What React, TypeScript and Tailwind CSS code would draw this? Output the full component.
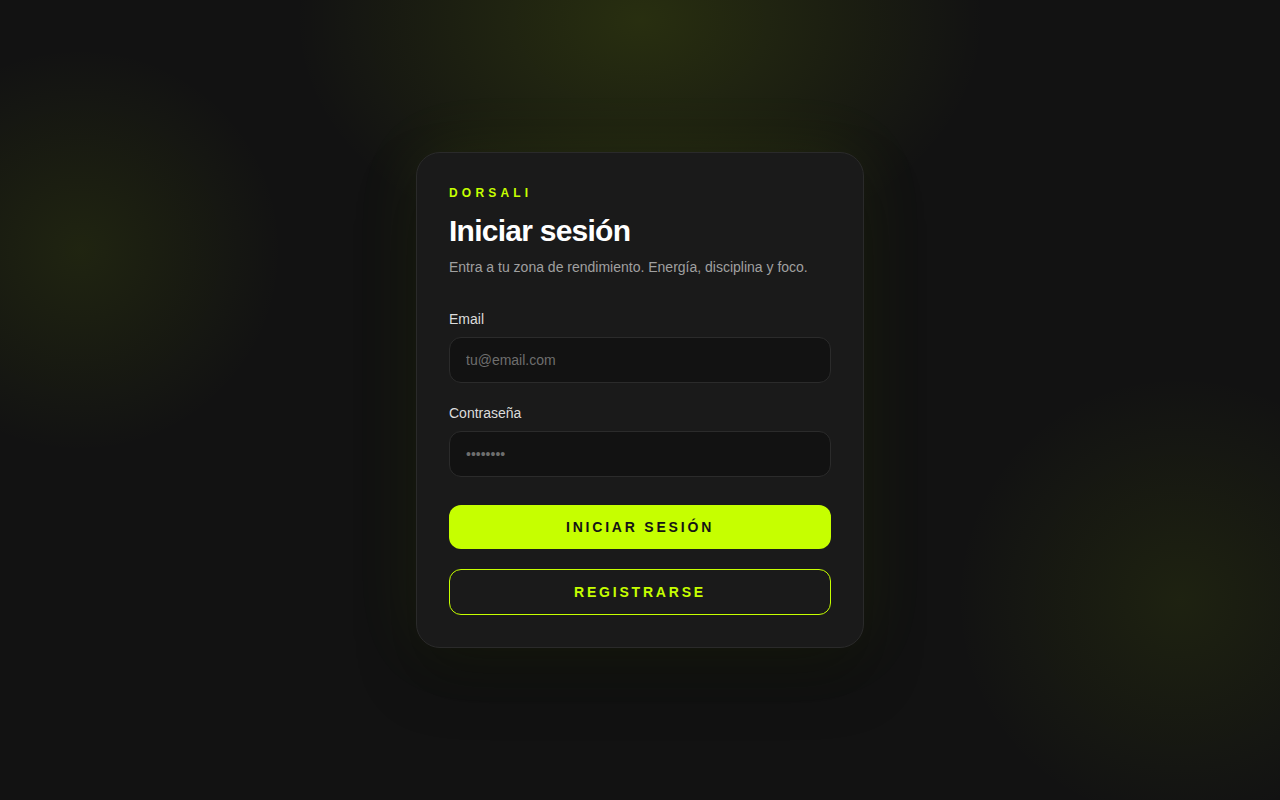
export default function App() {
  return (
    <main
      className="flex min-h-screen w-full items-center justify-center bg-[#121212] bg-[radial-gradient(ellipse_480px_340px_at_640px_20px,rgba(190,240,0,0.13),transparent_72%),radial-gradient(circle_270px_at_80px_250px,rgba(170,220,0,0.09),transparent_75%),radial-gradient(circle_300px_at_1180px_600px,rgba(170,220,0,0.08),transparent_75%)] font-['Liberation_Sans',Arial,sans-serif]"
    >
      <div className="w-[448px] rounded-3xl border border-[#2a2a2a] bg-[#1a1a1a] px-8 py-8 shadow-[0_0_70px_rgba(190,240,0,0.07),0_30px_60px_rgba(0,0,0,0.3)]">
        <p className="text-xs leading-4 font-bold tracking-[0.35em] text-[#c6ff00]">DORSALI</p>
        <h1 className="mt-3 text-3xl leading-9 font-bold tracking-tight text-white">Iniciar sesión</h1>
        <p className="mt-2 text-sm leading-5 text-[#a0a0a0]">
          Entra a tu zona de rendimiento. Energía, disciplina y foco.
        </p>

        <form className="mt-8 flex flex-col" onSubmit={(e) => e.preventDefault()}>
          <label className="text-sm leading-5 text-[#dcdcdc]" htmlFor="email">
            Email
          </label>
          <input
            id="email"
            type="email"
            placeholder="tu@email.com"
            className="mt-2 h-[46px] rounded-xl border border-[#2b2b2b] bg-[#121212] px-4 text-sm text-white outline-none placeholder:text-[#6e6e6e]"
          />

          <label className="mt-5 text-sm leading-5 text-[#dcdcdc]" htmlFor="password">
            Contraseña
          </label>
          <input
            id="password"
            type="password"
            placeholder="••••••••"
            className="mt-2 h-[46px] rounded-xl border border-[#2b2b2b] bg-[#121212] px-4 text-sm text-white outline-none placeholder:text-[#6e6e6e]"
          />

          <button
            type="submit"
            className="mt-7 h-11 rounded-xl bg-[#c6ff00] text-sm font-bold tracking-[0.2em] text-[#141414]"
          >
            INICIAR SESIÓN
          </button>
          <button
            type="button"
            className="mt-5 h-[46px] rounded-xl border border-[#c6ff00] bg-transparent text-sm font-bold tracking-[0.2em] text-[#c6ff00]"
          >
            REGISTRARSE
          </button>
        </form>
      </div>
    </main>
  );
}
